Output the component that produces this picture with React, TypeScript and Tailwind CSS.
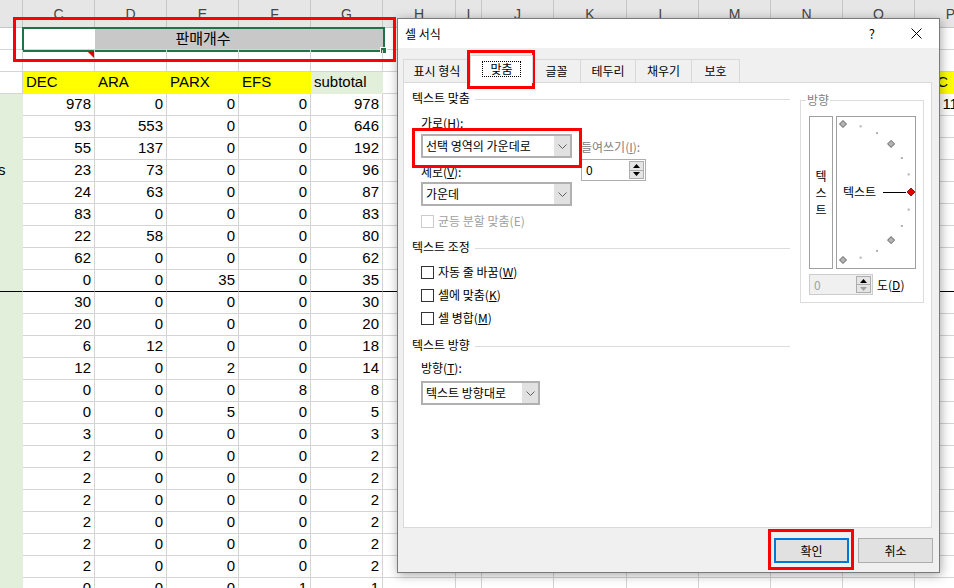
import { clsx } from 'clsx';
import { ReactNode } from 'react';

const COLS = [
  'w-[23px]',
  'w-[72px]',
  'w-[72px]',
  'w-[72px]',
  'w-[72px]',
  'w-[72px]',
  'w-[73px]',
  'w-[26px]',
  'w-[72px]',
  'w-[73px]',
  'w-[72px]',
  'w-[72px]',
  'w-[72px]',
  'w-[72px]',
  'w-[72px]'
];
const LETTERS = ['', 'C', 'D', 'E', 'F', 'G', 'H', 'I', 'J', 'K', 'L', 'M', 'N', 'O', 'P'];

const DATA = [
  [978, 0, 0, 0, 978],
  [93, 553, 0, 0, 646],
  [55, 137, 0, 0, 192],
  [23, 73, 0, 0, 96],
  [24, 63, 0, 0, 87],
  [83, 0, 0, 0, 83],
  [22, 58, 0, 0, 80],
  [62, 0, 0, 0, 62],
  [0, 0, 35, 0, 35],
  [30, 0, 0, 0, 30],
  [20, 0, 0, 0, 20],
  [6, 12, 0, 0, 18],
  [12, 0, 2, 0, 14],
  [0, 0, 0, 8, 8],
  [0, 0, 5, 0, 5],
  [3, 0, 0, 0, 3],
  [2, 0, 0, 0, 2],
  [2, 0, 0, 0, 2],
  [2, 0, 0, 0, 2],
  [2, 0, 0, 0, 2],
  [2, 0, 0, 0, 2],
  [2, 0, 0, 0, 2],
  [0, 0, 0, 1, 1]
];

const grid = 'border-r border-b border-[#d4d4d4]';

const HeaderRow = () => (
  <div className="flex h-[28px] bg-[#e6e6e6] text-[14px] text-[#444]">
    {COLS.map((w, i) => (
      <div
        key={i}
        className={clsx(
          w,
          'flex shrink-0 items-center justify-center border-r border-b border-[#c6c6c6] pt-[1px]'
        )}
      >
        {LETTERS[i]}
      </div>
    ))}
  </div>
);

const MergedRow = () => (
  <div className="relative flex h-[22px]">
    <div className={clsx(COLS[0], grid, 'shrink-0')} />
    <div className="flex w-[360px] shrink-0 items-center justify-center border-b border-[#d4d4d4] bg-[linear-gradient(90deg,#fff_72px,#c8c8c8_72px)] font-['Noto_Sans_CJK_KR',sans-serif] text-[15px]">
      판매개수
    </div>
    {COLS.slice(6).map((w, i) => (
      <div key={i} className={clsx(w, grid, 'shrink-0')} />
    ))}
    <div className="absolute left-[22px] top-[-1px] h-[25px] w-[363px] border-2 border-[#217346]" />
    <div className="absolute left-[380px] top-[19px] h-[7px] w-[7px] border border-white bg-[#217346]" />
  </div>
);

const EmptyRow = () => (
  <div className="flex h-[22px]">
    {COLS.map((w, i) => (
      <div key={i} className={clsx(w, grid, 'relative shrink-0')}>
        {i === 1 && (
          <svg className="absolute right-0 top-[1px]" width="7" height="7">
            <polygon points="0,0 7,0 7,7" fill="#e00000" />
          </svg>
        )}
      </div>
    ))}
  </div>
);

const TITLES = ['DEC', 'ARA', 'PARX', 'EFS', 'subtotal'];

const TitleRow = () => (
  <div className="flex h-[22px]">
    {COLS.map((w, i) => {
      const yellow = (i >= 1 && i <= 4) || i === 14;
      const green = i === 5;
      return (
        <div
          key={i}
          className={clsx(
            w,
            'flex shrink-0 items-center overflow-hidden whitespace-nowrap border-r border-b pl-[3px]',
            yellow && 'border-transparent bg-[#ffff00]',
            green && 'border-transparent bg-[#e2efda]',
            !yellow && !green && 'border-[#d4d4d4]'
          )}
        >
          {i >= 1 && i <= 5 ? TITLES[i - 1] : i === 14 ? 'ETC' : ''}
        </div>
      );
    })}
  </div>
);

const DataRow = ({ values, index }: { values: number[]; index: number }) => {
  const thick = index === 8;
  return (
    <div className="flex h-[22px]">
      {COLS.map((w, i) => (
        <div
          key={i}
          className={clsx(
            w,
            'flex shrink-0 items-center overflow-hidden whitespace-nowrap border-b',
            i === 0
              ? 'border-r border-r-transparent bg-[#e2efda]'
              : 'border-r border-r-[#d4d4d4]',
            thick
              ? 'border-b-black'
              : i === 0
                ? 'border-b-transparent'
                : 'border-b-[#d4d4d4]',
            i === 0 ? 'justify-start' : 'justify-end pr-[3px]'
          )}
        >
          {i === 0 && index === 3 ? <span className="-ml-[2px]">s</span> : null}
          {i >= 1 && i <= 5 ? values[i - 1] : null}
          {i === 14 && index === 0 ? '11215' : null}
        </div>
      ))}
    </div>
  );
};

const Sheet = () => (
  <div className="flex flex-col font-['Liberation_Sans','Noto_Sans_CJK_KR',sans-serif] text-[15px] text-black">
    <HeaderRow />
    <MergedRow />
    <EmptyRow />
    <TitleRow />
    {DATA.map((r, i) => (
      <DataRow key={i} values={r} index={i} />
    ))}
  </div>
);

const Chevron = () => (
  <svg width="9" height="5" viewBox="0 0 9 5">
    <polyline points="0.5,0.5 4.5,4.5 8.5,0.5" fill="none" stroke="#606060" strokeWidth="1" />
  </svg>
);

const Select = ({ value, className }: { value: string; className?: string }) => (
  <div className={clsx('flex h-[24px] border-2 border-[#b0b0b0] bg-white', className)}>
    <div className="flex flex-1 items-center whitespace-nowrap pl-[3px]">{value}</div>
    <div className="flex w-[16px] items-center justify-center bg-[#e1e1e1]">
      <Chevron />
    </div>
  </div>
);

const Check = ({
  children,
  disabled,
  className
}: {
  children: ReactNode;
  disabled?: boolean;
  className?: string;
}) => (
  <div className={clsx('flex h-[16px] items-center', className)}>
    <div
      className={clsx(
        'h-[13px] w-[13px] border bg-white',
        disabled ? 'border-[#cccccc]' : 'border-[#333]'
      )}
    />
    <span className={clsx('ml-[4px]', disabled && 'text-[#a0a0a0]')}>{children}</span>
  </div>
);

const Arrow = ({ up, color }: { up?: boolean; color: string }) => (
  <svg width="7" height="4" viewBox="0 0 7 4">
    <polygon points={up ? '0,4 7,4 3.5,0' : '0,0 7,0 3.5,4'} fill={color} />
  </svg>
);

const Spin = ({ disabled, className }: { disabled?: boolean; className?: string }) => (
  <div
    className={clsx(
      'flex border',
      disabled ? 'border-[#cccccc] bg-[#f0f0f0] text-[#a0a0a0]' : 'border-[#adadad] bg-white',
      className
    )}
  >
    <div className="flex flex-1 items-center pl-[4px]">0</div>
    <div className="my-[1px] mr-[1px] flex w-[15px] flex-col">
      <div className="flex flex-1 items-center justify-center border border-[#adadad] bg-[#e5e5e5]">
        <Arrow up color="#000" />
      </div>
      <div className="-mt-px flex flex-1 items-center justify-center border border-[#adadad] bg-[#e5e5e5]">
        <Arrow color={disabled ? '#a0a0a0' : '#000'} />
      </div>
    </div>
  </div>
);

const Section = ({ title, className }: { title: string; className?: string }) => (
  <div className={clsx('flex h-[16px] items-center', className)}>
    <span>{title}</span>
    <div className="ml-[5px] mt-[3px] h-px flex-1 bg-[#dcdcdc]" />
  </div>
);

const ANGLES = [90, 75, 60, 45, 30, 15, 0, -15, -30, -45, -60, -75, -90];

const Dial = () => {
  const cx = 6;
  const cy = 75;
  const r = 68;
  return (
    <div className="relative ml-[3px] h-[153px] w-[80px] border border-[#a0a0a0]">
      <svg className="absolute left-0 top-0" width="78" height="151">
        {ANGLES.map(a => {
          const x = cx + r * Math.cos((a * Math.PI) / 180);
          const y = cy - r * Math.sin((a * Math.PI) / 180);
          if (a === 0) {
            return (
              <polygon
                key={a}
                points={`${x - 4},${y} ${x},${y - 4} ${x + 4},${y} ${x},${y + 4}`}
                fill="#e00000"
                stroke="#800000"
                strokeWidth="0.8"
              />
            );
          }
          if (a % 45 === 0) {
            return (
              <polygon
                key={a}
                points={`${x - 3.5},${y} ${x},${y - 3.5} ${x + 3.5},${y} ${x},${y + 3.5}`}
                fill="#b4b4b4"
                stroke="#404040"
                strokeWidth="0.8"
              />
            );
          }
          return <rect key={a} x={x - 1} y={y - 1} width="2" height="2" fill="#b0b0b0" />;
        })}
        <line x1="46" y1="75.5" x2="69" y2="75.5" stroke="#000" strokeWidth="1" />
      </svg>
      <span className="absolute left-[6px] top-[67px] leading-[16px]">텍스트</span>
    </div>
  );
};

const TABS = [
  { label: '표시 형식', w: 'w-[68px]' },
  { label: '맞춤', w: 'w-[63px]', active: true },
  { label: '글꼴', w: 'w-[49px]' },
  { label: '테두리', w: 'w-[56px]' },
  { label: '채우기', w: 'w-[57px]' },
  { label: '보호', w: 'w-[49px]' }
];

const Dialog = () => (
  <div className="absolute left-[397px] top-[18px] flex h-[555px] w-[543px] flex-col border border-[#7a7a7a] bg-[#f0f0f0] font-['Noto_Sans_CJK_KR',sans-serif] text-[12px] leading-[16px] text-black shadow-[1px_2px_10px_rgba(0,0,0,0.35)]">
    <div className="flex h-[29px] shrink-0 items-center bg-white pl-[7px]">
      <span>셀 서식</span>
      <span className="ml-auto mr-[36px] text-[13px]">?</span>
      <svg className="mr-[17px]" width="11" height="11" viewBox="0 0 11 11">
        <path d="M0.5 0.5 L10.5 10.5 M10.5 0.5 L0.5 10.5" stroke="#000" strokeWidth="1" />
      </svg>
    </div>
    <div className="flex h-[34px] shrink-0 items-end pl-[5px]">
      {TABS.map((t, i) => (
        <div
          key={t.label}
          className={clsx(
            t.w,
            'flex shrink-0 items-center justify-center border border-b-0 border-[#d9d9d9]',
            i > 0 && '-ml-px',
            t.active ? 'relative z-10 -mb-px h-[28px] bg-white pb-[2px]' : 'h-[23px]'
          )}
        >
          {t.active ? (
            <span className="border border-dotted border-black px-[7px] leading-[14px]">
              {t.label}
            </span>
          ) : (
            t.label
          )}
        </div>
      ))}
    </div>
    <div className="ml-[5px] flex h-[446px] w-[529px] shrink-0 border border-[#d9d9d9] bg-white">
      <div className="flex w-[386px] shrink-0 flex-col pl-[8px] pt-[7px]">
        <Section title="텍스트 맞춤" />
        <div className="mt-[9px] flex flex-col pl-[9px]">
          <div className="h-[16px]">
            가로(<u>H</u>):
          </div>
          <div className="mt-[3px] flex">
            <div className="flex flex-col">
              <Select className="w-[151px]" value="선택 영역의 가운데로" />
              <div className="mt-[6px] h-[16px]">
                세로(<u>V</u>):
              </div>
              <Select className="mt-[2px] w-[151px]" value="가운데" />
              <Check disabled className="mt-[7px]">
                균등 분할 맞춤(E)
              </Check>
            </div>
            <div className="ml-[9px] flex flex-col pt-[5px]">
              <div className="h-[16px] text-[#808080]">
                들여쓰기(<u>I</u>):
              </div>
              <Spin className="mt-[4px] h-[22px] w-[65px]" />
            </div>
          </div>
        </div>
        <Section className="mt-[10px]" title="텍스트 조정" />
        <div className="mt-[9px] flex flex-col gap-[7px] pl-[9px]">
          <Check>
            자동 줄 바꿈(<u>W</u>)
          </Check>
          <Check>
            셀에 맞춤(<u>K</u>)
          </Check>
          <Check>
            셀 병합(<u>M</u>)
          </Check>
        </div>
        <Section className="mt-[11px]" title="텍스트 방향" />
        <div className="mt-[7px] flex flex-col pl-[9px]">
          <div className="h-[16px]">
            방향(<u>T</u>):
          </div>
          <Select className="mt-[5px] w-[119px]" value="텍스트 방향대로" />
        </div>
      </div>
      <div className="relative ml-[10px] mt-[17px] h-[203px] w-[124px] shrink-0 border border-[#dcdcdc]">
        <span className="absolute -top-[9px] left-[5px] bg-white px-[1px] text-[#808080]">
          방향
        </span>
        <div className="flex pl-[8px] pt-[15px]">
          <div className="flex h-[153px] w-[24px] flex-col items-center justify-center border border-[#a0a0a0] leading-[17px]">
            <span>텍</span>
            <span>스</span>
            <span>트</span>
          </div>
          <Dial />
        </div>
        <div className="mt-[5px] flex items-center pl-[8px]">
          <Spin disabled className="h-[21px] w-[64px]" />
          <span className="ml-[4px]">
            도(<u>D</u>)
          </span>
        </div>
      </div>
    </div>
    <div className="flex justify-end gap-[9px] pr-[6px] pt-[10px]">
      <div className="flex h-[25px] w-[75px] items-center justify-center border-2 border-[#0078d7] bg-[#e1e1e1]">
        확인
      </div>
      <div className="flex h-[25px] w-[75px] items-center justify-center border border-[#adadad] bg-[#e1e1e1]">
        취소
      </div>
    </div>
  </div>
);

export default function App() {
  return (
    <div className="relative h-[588px] w-[954px] overflow-hidden bg-white">
      <Sheet />
      <Dialog />
      <div className="absolute left-[13px] top-[17px] h-[45px] w-[383px] border-[3px] border-[#ff0000]" />
      <div className="absolute left-[467px] top-[50px] h-[39px] w-[68px] border-[3px] border-[#ff0000]" />
      <div className="absolute left-[412px] top-[128px] h-[40px] w-[170px] border-[3px] border-[#ff0000]" />
      <div className="absolute left-[768px] top-[529px] h-[41px] w-[86px] border-[3px] border-[#ff0000]" />
    </div>
  );
}
